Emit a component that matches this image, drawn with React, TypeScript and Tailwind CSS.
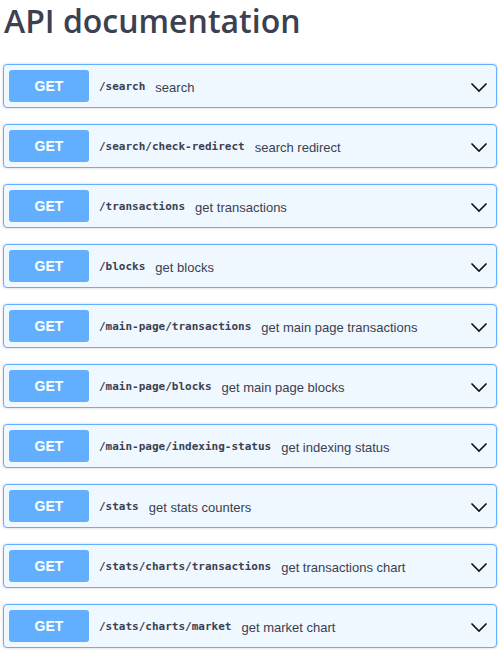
const endpoints = [
  { path: "/search", summary: "search" },
  { path: "/search/check-redirect", summary: "search redirect" },
  { path: "/transactions", summary: "get transactions" },
  { path: "/blocks", summary: "get blocks" },
  { path: "/main-page/transactions", summary: "get main page transactions" },
  { path: "/main-page/blocks", summary: "get main page blocks" },
  { path: "/main-page/indexing-status", summary: "get indexing status" },
  { path: "/stats", summary: "get stats counters" },
  { path: "/stats/charts/transactions", summary: "get transactions chart" },
  { path: "/stats/charts/market", summary: "get market chart" },
];

function Chevron() {
  return (
    <svg width="20" height="20" viewBox="0 0 20 20" className="shrink-0 mt-[2px]">
      <path d="M2.5 6.5 L10 14 L17.5 6.5" fill="none" stroke="#111" strokeWidth="1.6" />
    </svg>
  );
}

export default function App() {
  return (
    <div className="w-[500px] h-[653px] overflow-hidden bg-white text-[#3b4151] px-[3px]">
      <h1
        className="text-[32px] leading-[42px] font-semibold pl-[1px] h-[64px]"
        style={{ fontFamily: "'Open Sans', sans-serif" }}
      >
        API documentation
      </h1>

      <div className="flex flex-col gap-4">
        {endpoints.map((e) => (
          <div
            key={e.path}
            className="flex items-center h-[44px] rounded-[4px] border border-[#61affe] bg-[#eff7ff] p-[5px] pr-[7px] shadow-[0_0_3px_rgba(0,0,0,0.19)]"
          >
            <div
              className="w-[80px] h-[32px] rounded-[3px] bg-[#61affe] text-white text-[14px] font-bold flex items-center justify-center shrink-0"
              style={{ fontFamily: "'Liberation Sans', Arial, sans-serif" }}
            >
              GET
            </div>
            <span
              className="ml-[10px] pt-[3px] text-[11px] font-bold"
              style={{ fontFamily: "'DejaVu Sans Mono', monospace" }}
            >
              {e.path}
            </span>
            <span
              className="ml-[10px] pt-[3px] text-[13px] flex-1"
              style={{ fontFamily: "'Liberation Sans', Arial, sans-serif" }}
            >
              {e.summary}
            </span>
            <Chevron />
          </div>
        ))}
      </div>
    </div>
  );
}
